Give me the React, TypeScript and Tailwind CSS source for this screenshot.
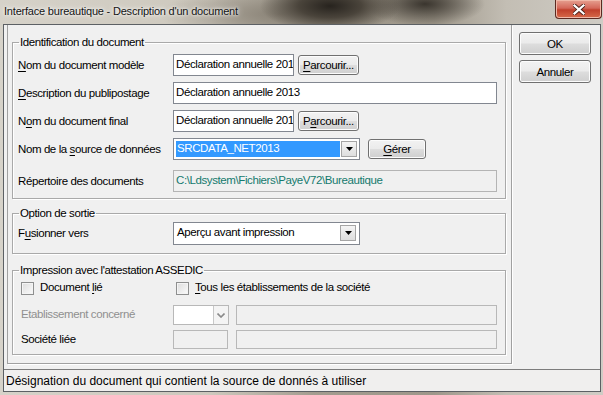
import type { ReactNode } from 'react'

const ui = "font-['Liberation_Sans',Arial,sans-serif]"
const txt = 'whitespace-nowrap text-[11.5px] tracking-[-0.4px]'

function Mn({ children }: { children: ReactNode }) {
  return <span className="underline decoration-1 underline-offset-[2px]">{children}</span>
}

function Label({ children, disabled }: { children: ReactNode; disabled?: boolean }) {
  return (
    <div className={`w-[155px] shrink-0 leading-[14px] ${txt} ${disabled ? 'text-[#8f8f8f]' : 'text-black'}`}>
      {children}
    </div>
  )
}

function Btn({ children, className }: { children: ReactNode; className: string }) {
  return (
    <button
      type="button"
      className={`flex items-center justify-center rounded-[3px] border border-[#707070] bg-[linear-gradient(#f2f2f2_0%,#ebebeb_48%,#dddddd_52%,#cfcfcf_100%)] leading-[14px] text-black shadow-[inset_0_0_0_1px_#fcfcfc] ${txt} ${className}`}
    >
      {children}
    </button>
  )
}

function DropArrow() {
  return (
    <div className="flex h-[16px] w-[16px] shrink-0 items-center justify-center border border-[#a5a5a5] bg-[linear-gradient(#f4f4f4,#dedede)]">
      <svg width="7" height="4" viewBox="0 0 7 4">
        <path d="M0 0h7L3.5 4z" fill="#000" />
      </svg>
    </div>
  )
}

function CheckBox() {
  return (
    <div className="h-[13px] w-[13px] shrink-0 border border-[#8e8f8f] bg-[linear-gradient(135deg,#dcdcdc,#fbfbfb)] shadow-[inset_0_0_0_1px_#f4f4f4]" />
  )
}

function Group({ title, children, className }: { title: string; children: ReactNode; className: string }) {
  return (
    <fieldset className={`ml-[4px] w-[494px] border border-[#a9a9a9] p-0 shadow-[inset_1px_1px_0_#ffffff,1px_1px_0_#ffffff] ${className}`}>
      <legend className={`ml-[6px] px-[1px] leading-[14px] text-black ${txt}`}>{title}</legend>
      {children}
    </fieldset>
  )
}

export default function App() {
  return (
    <div
      className={`relative h-[395px] w-[603px] overflow-hidden ${ui} bg-[radial-gradient(ellipse_70px_26px_at_330px_6px,#27231e_0%,#4a443b_45%,transparent_100%),radial-gradient(ellipse_60px_22px_at_425px_4px,#3a352e_0%,transparent_100%),radial-gradient(ellipse_120px_30px_at_280px_14px,#8a8377_0%,transparent_100%),linear-gradient(90deg,#d6d2c9_0%,#cdc8bd_35%,#a39c8f_52%,#9e978a_72%,#c3beb4_84%,#cfccc5_100%)]`}
    >
      {/* title bar */}
      <div className="flex h-[24px] items-start">
        <span className="whitespace-nowrap pl-[4px] pt-[3px] text-[11px] leading-[16px] tracking-[-0.2px] text-[#141414] [text-shadow:0_0_6px_#ffffff,0_0_3px_#ffffff]">
          Interface bureautique - Description d&apos;un document
        </span>
        <div className="ml-auto mr-[1px] flex h-[19px] w-[47px] items-center justify-center rounded-b-[4px] border border-t-0 border-[#5b2a22] bg-[linear-gradient(#e6a090_0%,#d4685a_45%,#c0402c_55%,#d66a4a_100%)] shadow-[inset_0_0_0_1px_#f0b8a8]">
          <svg width="12" height="11" viewBox="0 0 12 11">
            <path d="M1.5 1.5l9 8M10.5 1.5l-9 8" stroke="#4a2018" strokeWidth="4" strokeLinecap="square" />
            <path d="M1.5 1.5l9 8M10.5 1.5l-9 8" stroke="#ffffff" strokeWidth="2.2" strokeLinecap="square" />
          </svg>
        </div>
      </div>

      {/* client area */}
      <div className="ml-[3px] flex h-[368px] w-[598px] flex-col border border-[#5c6064] bg-[#f0f0f0]">
        <div className="flex h-[344px]">
          <div className="ml-[3px] flex h-[339px] w-[505px] flex-col border border-t-0 border-[#a0a0a0] shadow-[1px_1px_0_#ffffff]">
            <Group title="Identification du document" className="mt-[10px]">
              <div className="flex flex-col pb-[6px] pl-[5px] pt-[5px]">
                <div className="flex h-[22px] items-center">
                  <Label>
                    <Mn>N</Mn>om du document modèle
                  </Label>
                  <div className={`flex h-[22px] w-[121px] items-center overflow-hidden border border-[#828790] bg-white pl-[2px] text-black ${txt}`}>
                    Déclaration annuelle 201
                  </div>
                  <Btn className="ml-[4px] h-[20px] w-[61px]">
                    <Mn>P</Mn>arcourir...
                  </Btn>
                </div>
                <div className="mt-[6px] flex h-[22px] items-center">
                  <Label>
                    <Mn>D</Mn>escription du publipostage
                  </Label>
                  <div className={`flex h-[22px] w-[324px] items-center border border-[#828790] bg-white pl-[2px] text-black ${txt}`}>
                    Déclaration annuelle 2013
                  </div>
                </div>
                <div className="mt-[6px] flex h-[22px] items-center">
                  <Label>
                    N<Mn>o</Mn>m du document final
                  </Label>
                  <div className={`flex h-[22px] w-[121px] items-center overflow-hidden border border-[#828790] bg-white pl-[2px] text-black ${txt}`}>
                    Déclaration annuelle 201
                  </div>
                  <Btn className="ml-[4px] h-[20px] w-[61px]">
                    P<Mn>a</Mn>rcourir...
                  </Btn>
                </div>
                <div className="mt-[6px] flex h-[22px] items-center">
                  <Label>
                    Nom de la <Mn>s</Mn>ource de données
                  </Label>
                  <div className="flex h-[22px] w-[187px] items-center gap-[1px] border border-[#828790] bg-white p-[2px]">
                    <div className={`flex h-full flex-1 items-center bg-[#3399ff] pl-[1px] text-white ${txt}`}>SRCDATA_NET2013</div>
                    <DropArrow />
                  </div>
                  <Btn className="ml-[8px] h-[20px] w-[58px]">
                    <Mn>G</Mn>érer
                  </Btn>
                </div>
                <div className="mt-[10px] flex h-[22px] items-center">
                  <Label>Répertoire des documents</Label>
                  <div className={`flex h-[22px] w-[324px] items-center border border-[#b4b4b4] bg-[#f0f0f0] pl-[2px] text-[#157a6e] ${txt}`}>
                    C:\Ldsystem\Fichiers\PayeV72\Bureautique
                  </div>
                </div>
              </div>
            </Group>

            <Group title="Option de sortie" className="mt-[7px]">
              <div className="pb-[9px] pl-[5px] pt-[2px]">
                <div className="flex h-[22px] items-center">
                  <Label>
                    F<Mn>u</Mn>sionner vers
                  </Label>
                  <div className="flex h-[23px] w-[187px] items-center border border-[#828790] bg-white p-[2px] pr-[3px]">
                    <div className={`flex-1 pl-[1px] text-black ${txt}`}>Aperçu avant impression</div>
                    <DropArrow />
                  </div>
                </div>
              </div>
            </Group>

            <Group title="Impression avec l'attestation ASSEDIC" className="mt-[9px]">
              <div className="pb-[5px] pl-[8px]">
                <div className="flex h-[22px] items-center">
                  <div className="flex w-[155px] items-center gap-[6px]">
                    <CheckBox />
                    <span className={`text-black ${txt}`}>
                      Document <Mn>l</Mn>ié
                    </span>
                  </div>
                  <div className="flex items-center gap-[6px]">
                    <CheckBox />
                    <span className={`text-black ${txt}`}>
                      <Mn>T</Mn>ous les établissements de la société
                    </span>
                  </div>
                </div>
                <div className="mt-[6px] flex h-[20px] items-center">
                  <div className={`w-[152px] shrink-0 text-[#8f8f8f] ${txt}`}>Etablissement concerné</div>
                  <div className="flex h-[20px] w-[56px] border border-[#b8b8b8] bg-white">
                    <div className="flex-1" />
                    <div className="flex w-[15px] items-center justify-center border-l border-[#c8c8c8] bg-[#f4f4f4]">
                      <svg width="8" height="5" viewBox="0 0 8 5">
                        <path d="M0.5 0.5L4 4L7.5 0.5" fill="none" stroke="#8a8a8a" strokeWidth="1.6" />
                      </svg>
                    </div>
                  </div>
                  <div className="ml-[7px] h-[20px] w-[261px] border border-[#b8b8b8] bg-[#f0f0f0]" />
                </div>
                <div className="mt-[5px] flex h-[19px] items-center">
                  <div className={`w-[152px] shrink-0 text-black ${txt}`}>Société liée</div>
                  <div className="h-[19px] w-[55px] border border-[#b8b8b8] bg-[#f0f0f0]" />
                  <div className="ml-[8px] h-[19px] w-[261px] border border-[#b8b8b8] bg-[#f0f0f0]" />
                </div>
              </div>
            </Group>
          </div>

          <div className="flex flex-col gap-[5px] pl-[7px] pt-[7px]">
            <Btn className="h-[23px] w-[72px] border-[#3c7fb1] shadow-[inset_0_0_0_1px_#b8e4fa]">OK</Btn>
            <Btn className="h-[23px] w-[72px]">Annuler</Btn>
          </div>
        </div>

        <div className="flex h-[22px] items-center whitespace-nowrap border-t border-[#7c7c7c] bg-[#f0efee] pl-[2px] text-[12px] text-black">
          Désignation du document qui contient la source de donnés à utiliser
        </div>
      </div>
    </div>
  )
}
